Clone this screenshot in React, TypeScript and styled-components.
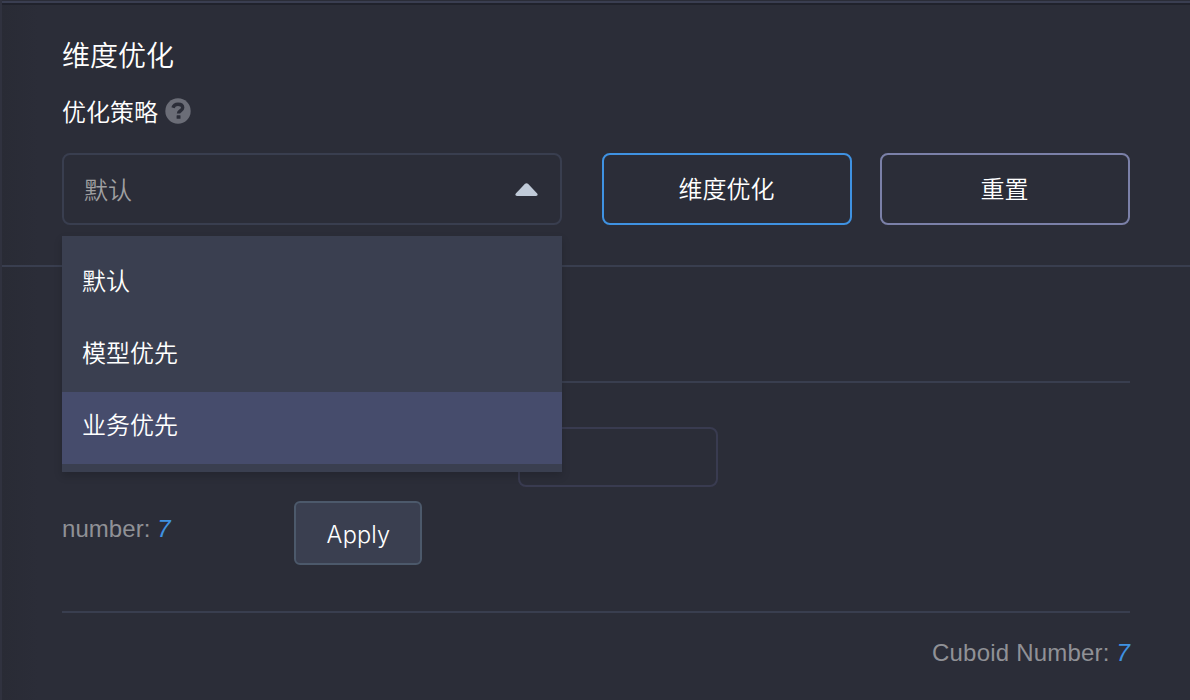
import React from "react";
import styled, { createGlobalStyle, css } from "styled-components";

const GlobalStyle = createGlobalStyle`
  * { box-sizing: border-box; }
  body {
    margin: 0;
    background: #2b2d38;
    font-family: "Liberation Sans", "Noto Sans CJK SC", sans-serif;
    font-size: 24px;
    color: #fff;
  }
`;

const cjk = css`
  font-family: "Noto Sans CJK SC", sans-serif;
  font-weight: 350;
`;

const Panel = styled.main`
  width: 1190px;
  height: 700px;
  overflow: hidden;
  border-left: 2px solid #30323f;
  background: linear-gradient(90deg, #292b35 0, #2b2d38 36px);
`;

const TopEdge = styled.div`
  height: 5px;
  background: linear-gradient(#2b2d38 1px, #3a3e51 1px 3px, #20222c 3px);
`;

const Strategy = styled.section`
  height: 262px;
  padding: 29px 60px 0;
  border-bottom: 2px solid #393e4f;
`;

const Title = styled.h1`
  ${cjk}
  margin: 0;
  height: 40px;
  font-size: 28px;
  line-height: 40px;
`;

const Label = styled.div`
  ${cjk}
  display: flex;
  align-items: center;
  gap: 7px;
  height: 36px;
  margin-top: 19px;
  line-height: 36px;
`;

const HelpIcon = styled.svg`
  width: 26px;
  height: 26px;
  margin-top: -1px;
`;

const Controls = styled.div`
  display: flex;
  margin-top: 24px;
`;

const SelectBox = styled.div`
  position: relative;
  width: 500px;
  height: 72px;
  margin-right: 40px;
`;

const SelectInput = styled.div`
  ${cjk}
  display: flex;
  align-items: center;
  justify-content: space-between;
  height: 72px;
  padding: 0 22px 1px 20px;
  border: 2px solid #393e4f;
  border-radius: 8px;
  color: #a0a0a2;
`;

const Arrow = styled.svg`
  width: 23px;
  height: 13px;
  margin-top: 2px;
`;

const Menu = styled.ul`
  position: absolute;
  z-index: 1;
  top: 83px;
  left: 0;
  width: 500px;
  height: 236px;
  margin: 0;
  padding: 12px 0 8px;
  list-style: none;
  background: #3a3f50;
  box-shadow: 0 4px 8px rgba(0, 0, 0, 0.16);
`;

const Option = styled.li<{ $active?: boolean }>`
  ${cjk}
  height: 72px;
  padding: 0 20px;
  line-height: 64px;
  background: ${(p) => (p.$active ? "#464c6c" : "transparent")};
`;

const Button = styled.button<{ $border: string }>`
  ${cjk}
  width: 250px;
  height: 72px;
  margin: 0 28px 0 0;
  padding: 0 1px 4px 0;
  border: 2px solid ${(p) => p.$border};
  border-radius: 8px;
  background: transparent;
  color: #fff;
  font-size: 24px;
  &:last-child { margin-right: 0; }
`;

const Details = styled.section`
  padding: 0 60px;
`;

const Heading = styled.div`
  height: 116px;
  border-bottom: 2px solid #393e4f;
`;

const FieldRow = styled.div`
  display: flex;
  padding: 44px 0 14px 456px;
`;

const Field = styled.input`
  width: 200px;
  height: 60px;
  border: 2px solid #393b50;
  border-radius: 8px;
  background: transparent;
`;

const ApplyRow = styled.div`
  display: flex;
  height: 112px;
  margin-bottom: 26px;
  border-bottom: 2px solid #393e4f;
`;

const Caption = styled.div<{ $spacing: number }>`
  height: 28px;
  line-height: 28px;
  letter-spacing: ${(p) => p.$spacing}px;
  white-space: nowrap;
  color: #909196;
`;

const CountCaption = styled(Caption)`
  width: 232px;
  margin-top: 14px;
`;

const TotalCaption = styled(Caption)`
  text-align: right;
`;

const Count = styled.em`
  color: #3f92e2;
`;

const ApplyButton = styled.button`
  width: 128px;
  height: 64px;
  padding: 2px 0 0 1px;
  border: 2px solid #4c596b;
  border-radius: 6px;
  background: #3a3f50;
  color: #fff;
  font: 350 23.5px Inter, sans-serif;
  letter-spacing: 0.2px;
`;

const options = ["默认", "模型优先", "业务优先"];

export default function App() {
  return (
    <Panel>
      <GlobalStyle />
      <TopEdge />
      <Strategy>
        <Title>维度优化</Title>
        <Label>
          优化策略
          <HelpIcon viewBox="0 0 26 26">
            <circle cx="13" cy="13" r="12.7" fill="#6b6d77" />
            <path
              d="M8 9.8C8.7 7.3 10.5 6.2 13 6.2c2.7 0 4.7 1.3 4.7 3.6 0 2.9-4.2 3-4.2 5.6"
              fill="none"
              stroke="#2b2d38"
              strokeWidth="3.4"
            />
            <rect x="11.6" y="17.2" width="3.9" height="3.6" rx="0.5" fill="#2b2d38" />
          </HelpIcon>
        </Label>
        <Controls>
          <SelectBox>
            <SelectInput>
              默认
              <Arrow viewBox="0 0 23 13">
                <path d="M10 .8Q11.5-.3 13 .8L22.2 10.4Q23.5 13 21 13H2Q-.5 13 .8 10.4Z" fill="#c0cad8" />
              </Arrow>
            </SelectInput>
            <Menu>
              {options.map((name, i) => (
                <Option key={name} $active={i === 2}>{name}</Option>
              ))}
            </Menu>
          </SelectBox>
          <Button $border="#3f92e2">维度优化</Button>
          <Button $border="#7b80a8">重置</Button>
        </Controls>
      </Strategy>
      <Details>
        <Heading />
        <FieldRow>
          <Field />
        </FieldRow>
        <ApplyRow>
          <CountCaption $spacing={0.05}>number: <Count>7</Count></CountCaption>
          <ApplyButton>Apply</ApplyButton>
        </ApplyRow>
        <TotalCaption $spacing={0.2}>Cuboid Number: <Count>7</Count></TotalCaption>
      </Details>
    </Panel>
  );
}
